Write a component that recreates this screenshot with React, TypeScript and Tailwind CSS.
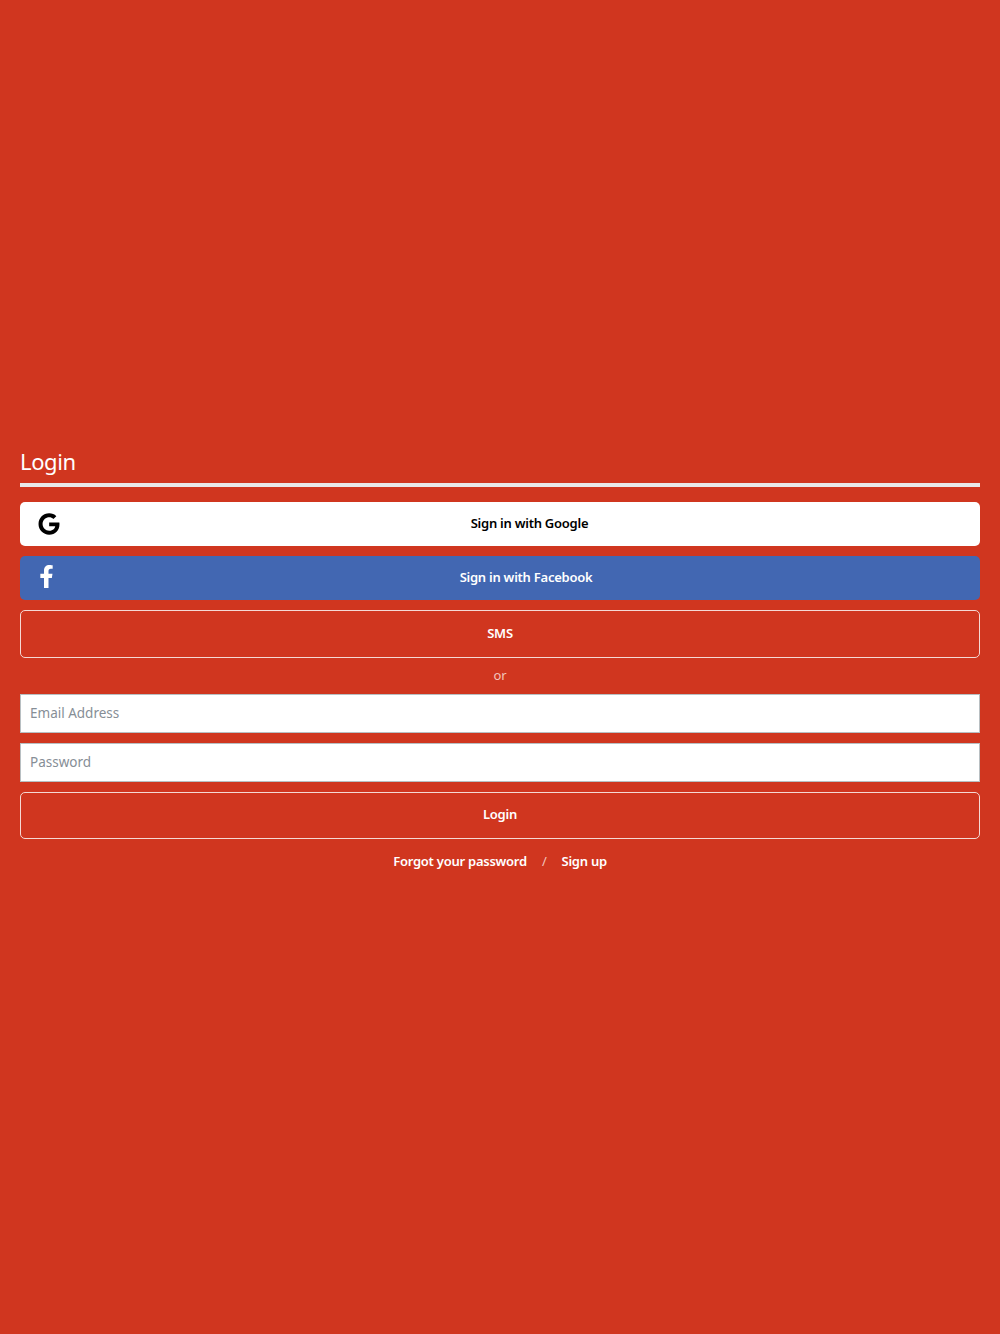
import React from "react";
import { FaGoogle, FaFacebookF } from "react-icons/fa";

const font = "font-['Noto_Sans','Noto_Sans_CJK_KR',sans-serif]";

export default function App() {
  return (
    <div className={`min-h-[1334px] bg-[#d0361f] px-5 pt-[444px] ${font}`}>
      <h1 className="text-[22px] leading-[34px] tracking-[-0.4px] text-white">Login</h1>
      <div className="mt-[5px] h-1 bg-[#e9e9e9]" />
      <div className="mt-[15px] flex flex-col gap-2.5">
        <button className="relative flex h-11 items-center justify-center rounded-[5px] bg-white pb-px pl-[59px] text-[13px] font-semibold tracking-[-0.25px] text-black">
          <FaGoogle className="absolute left-[18px] top-[11px] text-[22px]" />
          Sign in with Google
        </button>
        <button className="relative flex h-11 items-center justify-center rounded-[5px] bg-[#4267b2] pb-px pl-[52px] text-[13px] font-semibold tracking-[-0.25px] text-white">
          <FaFacebookF className="absolute left-[15px] top-[9px] text-[23px]" />
          Sign in with Facebook
        </button>
        <button className="flex h-[48px] items-center justify-center rounded-[5px] border border-[#f5d9d4] pb-px text-[13px] font-semibold tracking-[-0.25px] text-white">
          SMS
        </button>
      </div>
      <p className="mt-[6px] text-center text-[13px] leading-[22px] text-[#f3c4bb]">or</p>
      <div className="mt-[8px] flex flex-col gap-2.5">
        <input
          placeholder="Email Address"
          className="h-[39px] w-full border border-[#b8bfc2] bg-white px-[9px] pb-px text-[13.5px] text-[#333] outline-none placeholder:text-[#868e96]"
        />
        <input
          placeholder="Password"
          className="h-[39px] w-full border border-[#b8bfc2] bg-white px-[9px] pb-px text-[13.5px] text-[#333] outline-none placeholder:text-[#868e96]"
        />
        <button className="flex h-[47px] items-center justify-center rounded-[5px] border border-[#f5d9d4] pb-px text-[13px] font-semibold tracking-[-0.25px] text-white">
          Login
        </button>
      </div>
      <div className="mt-[11px] flex items-center justify-center text-[13px] font-semibold leading-[22px] tracking-[-0.25px] text-white">
        <span>Forgot your password</span>
        <span className="mx-[15px] font-normal text-[#f3c4bb]">/</span>
        <span>Sign up</span>
      </div>
    </div>
  );
}
